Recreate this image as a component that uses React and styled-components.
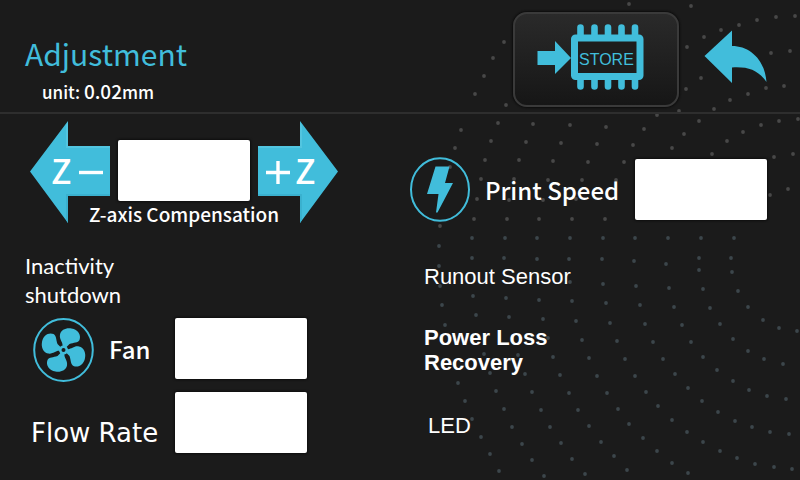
import React from "react";
import styled, { createGlobalStyle } from "styled-components";

const CYAN = "#41bddb";
const HAN = '"Noto Sans CJK SC", "Noto Sans", sans-serif';
const ARIAL = '"Liberation Sans", Arial, sans-serif';

const GlobalStyle = createGlobalStyle`
  *, *::before, *::after { box-sizing: border-box; }
  body { margin: 0; background: #1b1b1b; color: #fff; font-family: ${HAN}; }
`;

const Screen = styled.div`
  position: relative;
  min-height: 100vh;
  overflow: hidden;
  background: #1b1b1b;
`;

const Backdrop = styled.svg`
  position: absolute;
  top: 0;
  right: 0;
  width: 400px;
  height: 480px;
  pointer-events: none;
`;

const Header = styled.header`
  position: relative;
  display: flex;
  justify-content: space-between;
  align-items: flex-start;
  padding: 12px 32px 5px 25px;
  border-bottom: 2px solid #2e2e2e;
`;

const Heading = styled.div`
  display: flex;
  flex-direction: column;
  padding-top: 18px;
`;

const Title = styled.h1`
  margin: 0;
  color: ${CYAN};
  font-size: 30px;
  font-weight: 400;
  line-height: 46px;
`;

const Unit = styled.p`
  margin: 0;
  padding-left: 17px;
  font-size: 17px;
  font-weight: 500;
  line-height: 30px;
`;

const UnitValue = styled.span`
  font-size: 19px;
`;

const Actions = styled.div`
  display: flex;
  gap: 25px;
`;

const StoreButton = styled.button`
  display: flex;
  align-items: flex-start;
  padding: 9px 33px 14px 22px;
  border: 2px solid #3a3a3a;
  border-radius: 14px;
  background: linear-gradient(#2a2a2a, #161616);
  box-shadow: 0 0 2px 1px #0c0c0c;
  cursor: pointer;
`;

const IconButton = styled.button`
  display: flex;
  padding: ${(p) => p.$pad || "0"};
  border: 0;
  background: none;
  cursor: pointer;
`;

const Main = styled.main`
  position: relative;
  display: grid;
  grid-template-columns: 1fr 1fr;
`;

const Column = styled.section`
  display: flex;
  flex-direction: column;
  padding: ${(p) => p.$pad};
`;

const ZControl = styled.div`
  display: grid;
  grid-template-columns: 80px 132px 80px;
  grid-template-rows: 80px 22px;
  column-gap: 8px;
  padding-left: 5px;
`;

const ZButton = styled(IconButton)`
  grid-row: 1 / 3;
  grid-column: ${(p) => p.$col};
`;

const ValueInput = styled.input`
  width: 132px;
  height: 61px;
  padding: 0 12px;
  border: 0;
  border-radius: 2px;
  background: #fff;
  color: #1b1b1b;
  font-family: ${HAN};
  font-size: 24px;
  text-align: center;
  box-shadow: 0 0 2px 1px #0e0e0e;
`;

const ZInput = styled(ValueInput)`
  grid-area: 1 / 2;
  align-self: end;
`;

const ZLabel = styled.label`
  grid-area: 2 / 1 / 3 / 4;
  justify-self: center;
  font-size: 19px;
  font-weight: 500;
  line-height: 26px;
  white-space: nowrap;
`;

const Inactivity = styled.p`
  width: 120px;
  margin: 28px 0 6px;
  font-family: Lato, sans-serif;
  font-size: 22px;
  line-height: 29px;
`;

const Field = styled.div`
  display: grid;
  grid-template-columns: ${(p) => p.$label} 132px;
  align-items: center;
  margin-bottom: 10px;
`;

const FieldLabel = styled.label`
  display: flex;
  align-items: center;
  gap: 15px;
  padding-left: ${(p) => p.$indent || "0"};
  font-size: 24px;
  font-weight: 500;
  line-height: 32px;
  white-space: nowrap;
`;

const FlowLabel = styled(FieldLabel)`
  padding-top: 20px;
  font-family: "DejaVu Sans", sans-serif;
  font-size: 26px;
  font-weight: 400;
`;

const Option = styled.p`
  width: 150px;
  margin: ${(p) => p.$margin};
  font-family: ${ARIAL};
  font-size: 22px;
  font-weight: ${(p) => (p.$bold ? 700 : 400)};
  line-height: 25px;
`;

const dots = [
  [504,42],[493,58],[484,76],[475,94],[506,105],[629,4],[691,6],[795,16],[776,17],[757,20],[739,25],[721,30],[704,37],[687,47],[701,78],[686,89],[790,51],[771,53],[784,86],[766,88],[748,94],[730,100],[714,109],[679,111],
  [461,130],[498,123],[533,124],[570,125],[606,127],[644,129],[684,134],[699,121],[657,115],
  [455,148],[491,141],[526,142],[561,143],[597,144],[633,145],[672,148],[712,154],[727,141],[743,132],[761,125],[779,121],[798,119],
  [485,160],[519,160],[553,161],[588,162],[624,162],[774,157],[793,154],
  [450,167],[481,179],[514,179],[548,180],[582,180],[616,180],[477,199],[509,200],[543,200],[576,199],
  [440,226],[474,219],[507,219],[539,219],[572,219],[605,219],[770,195],[788,189],
  [439,246],[472,238],[505,238],[537,238],[570,238],[603,238],[635,238],[668,238],[701,238],[734,238],
  [439,266],[472,258],[504,258],[537,259],[569,259],[602,259],[634,261],[666,264],[699,258],[731,258],[699,270],[732,272],
  [440,286],[570,282],[603,284],[636,286],[669,288],[703,289],[738,291],
  [442,305],[473,296],[506,298],[539,300],[572,301],[606,303],[640,305],[674,307],[710,308],[748,307],
  [445,325],[476,315],[509,317],[543,319],[576,321],[610,323],[645,324],[682,325],[720,324],[763,320],[779,328],[797,331],
  [548,338],[582,340],[617,341],[653,342],[691,342],[733,339],
  [484,354],[518,355],[553,357],[589,358],[625,359],[663,359],[703,357],[748,351],[764,359],[783,364],
  [490,373],[525,374],[560,375],[597,376],[635,376],[675,374],[717,370],[733,381],[749,390],[767,396],[786,399],
  [458,383],[496,391],[532,392],[569,393],[607,393],[646,392],[688,388],[702,401],[718,412],[735,421],[752,427],[770,432],[789,434],
  [465,401],[504,409],[541,410],[578,410],[618,409],[658,406],[672,420],[687,432],[703,442],[720,451],[737,458],[755,464],[774,467],[792,469],
  [472,419],[512,427],[550,427],[589,426],[629,424],[643,438],[657,451],[672,463],[688,473],
  [481,437],[522,444],[561,443],[601,442],[614,456],[627,470],
  [490,454],[532,460],[572,459],[585,474],[499,471],[544,476],
];

function DotField() {
  return (
    <Backdrop viewBox="400 0 400 480" aria-hidden="true">
      {dots.map(([x, y]) => (
        <circle key={`${x}-${y}`} cx={x} cy={y} r="1.900" fill={y > 230 ? "#3c464b" : "#484848"} />
      ))}
    </Backdrop>
  );
}

function StoreIcon() {
  const pins = [579.5, 593.5, 607, 620.5, 634];
  return (
    <svg width="107" height="68" viewBox="536 23 107 68" aria-hidden="true">
      <g stroke={CYAN} strokeWidth="6.6" strokeLinecap="round">
        {pins.map((x) => (
          <path key={x} d={`M${x} 27.5V37M${x} 78V86.5`} />
        ))}
      </g>
      <rect x="573.5" y="38" width="65.5" height="38.5" rx="1" fill="#1d1d1d" stroke={CYAN} strokeWidth="7" />
      <path d="M536.5 51H554V41L570 58 554 74V65H536.5Z" fill={CYAN} />
      <text x="578" y="65" fontFamily={ARIAL} fontSize="16" fill={CYAN}>STORE</text>
    </svg>
  );
}

function BackIcon() {
  return (
    <svg width="64" height="53" viewBox="704 30 64 53" aria-hidden="true">
      <path d="M704.5 56 732 30.500V46C750 46 765 60 766.500 82C758 70 748 66.500 732 67.500V83Z" fill={CYAN} />
    </svg>
  );
}

function ZArrow({ plus }) {
  const shape = "M0 50.500 38 0V25H80V75H38V102Z";
  return (
    <svg width="80" height="102" viewBox="0 0 80 102" aria-hidden="true">
      <g transform={plus ? "matrix(-1 0 0 1 80 0)" : undefined}>
        <path d={shape} fill={CYAN} />
        <path d="M38 73H80V75H38V102L36 99V73Z" fill="#3ab1cf" />
        <path d="M38 1V25H80V27H36V4Z" fill="#52c5e0" />
      </g>
      <text x={plus ? 37 : 21} y="63" fontFamily={HAN} fontSize="34" fontWeight="500" fill="#fff">Z</text>
      <path d={plus ? "M8 51.500H32M20 40V63" : "M49 51.500H73"} stroke="#fff" strokeWidth="3.4" />
    </svg>
  );
}

function SpeedIcon() {
  return (
    <svg width="60" height="65" viewBox="410 158 60 65" aria-hidden="true">
      <ellipse cx="440" cy="190.5" rx="29" ry="31.3" fill="none" stroke={CYAN} strokeWidth="2" />
      <path d="M435.500 167.500H449.500L445 184H453L437.500 213.500H436L438.500 195H427Z" fill={CYAN} />
    </svg>
  );
}

function FanIcon() {
  return (
    <svg width="61" height="67" viewBox="-30.500 -35 61 67" aria-hidden="true">
      <ellipse rx="29.300" ry="31" fill="none" stroke={CYAN} strokeWidth="2" />
      {[0, 90, 180, 270].map((a) => (
        <path
          key={a}
          transform={`rotate(${a})`}
          d="M-1 -3C0 -8 -4.500 -10 -3.500 -15.500C-2.500 -20.500 3 -22.500 8 -21.500C14.500 -20.500 18 -15 16 -10C14.500 -7 10 -7.500 6 -6L3 -3Z"
          fill={CYAN}
        />
      ))}
      <circle r="4.500" fill={CYAN} />
      <circle r="2" fill="#1b1b1b" />
    </svg>
  );
}

export default function App() {
  return (
    <Screen>
      <GlobalStyle />
      <DotField />
      <Header>
        <Heading>
          <Title>Adjustment</Title>
          <Unit>unit: <UnitValue>0.02</UnitValue>mm</Unit>
        </Heading>
        <Actions>
          <StoreButton type="button" aria-label="Store"><StoreIcon /></StoreButton>
          <IconButton type="button" aria-label="Back" $pad="18px 0 0"><BackIcon /></IconButton>
        </Actions>
      </Header>
      <Main>
        <Column $pad="7px 0 0 25px">
          <ZControl>
            <ZButton type="button" aria-label="Z minus" $col={1}><ZArrow /></ZButton>
            <ZInput id="z-offset" type="text" />
            <ZButton type="button" aria-label="Z plus" $col={3}><ZArrow plus /></ZButton>
            <ZLabel htmlFor="z-offset">Z-axis Compensation</ZLabel>
          </ZControl>
          <Inactivity>Inactivity shutdown</Inactivity>
          <Field $label="150px">
            <FieldLabel htmlFor="fan" $indent="8px"><FanIcon />Fan</FieldLabel>
            <ValueInput id="fan" type="text" />
          </Field>
          <Field $label="150px">
            <FlowLabel htmlFor="flow" $indent="6px">Flow Rate</FlowLabel>
            <ValueInput id="flow" type="text" />
          </Field>
        </Column>
        <Column $pad="43px 0 0 10px">
          <Field $label="225px">
            <FieldLabel htmlFor="speed"><SpeedIcon />Print Speed</FieldLabel>
            <ValueInput id="speed" type="text" />
          </Field>
          <Option $margin="32px 0 0 14px">Runout Sensor</Option>
          <Option $margin="36px 0 0 14px" $bold>Power Loss Recovery</Option>
          <Option $margin="38px 0 0 18px">LED</Option>
        </Column>
      </Main>
    </Screen>
  );
}
